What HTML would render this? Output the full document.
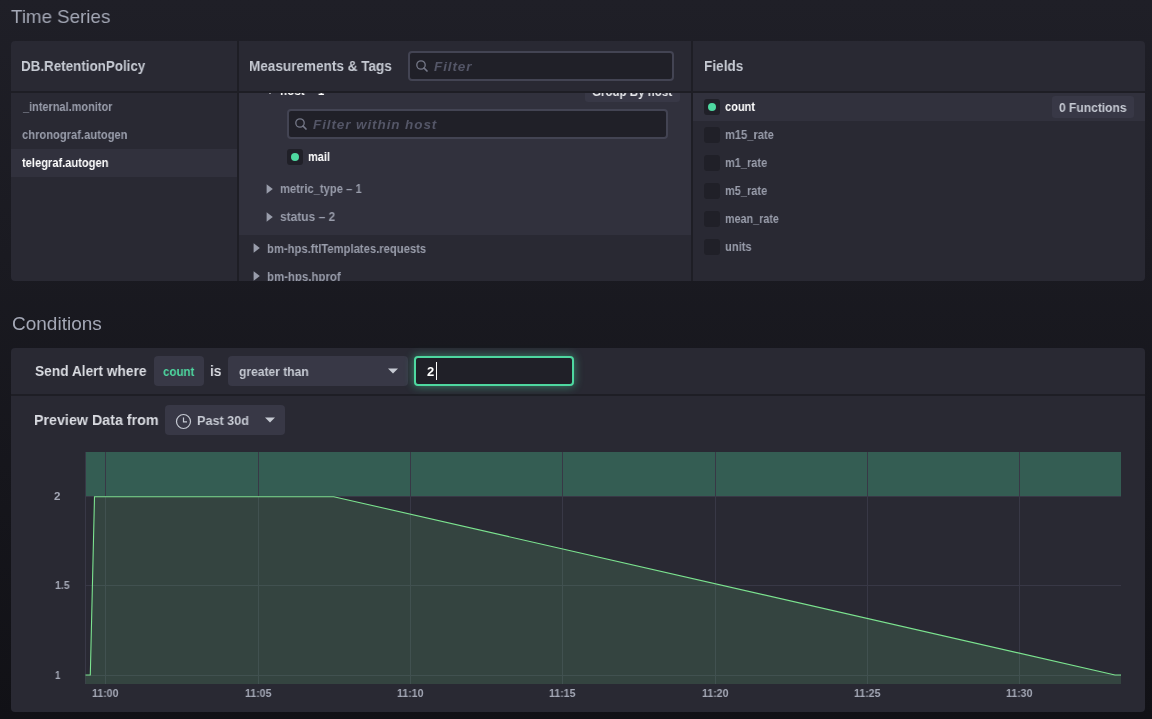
<!DOCTYPE html>
<html><head><meta charset="utf-8"><style>
html,body{margin:0;padding:0;width:1152px;height:719px;overflow:hidden;}
body{background:linear-gradient(to bottom,#1f1f27 0%,#111116 100%);font-family:"Liberation Sans",sans-serif;position:relative;}
.t{position:absolute;white-space:nowrap;will-change:transform;}
.r{position:absolute;}
</style></head><body>
<div class="t" style="left:11.2px;top:6.92px;font-size:19px;line-height:19px;color:#a4a8b6;transform:scaleX(0.9865);transform-origin:0 0;">Time Series</div>
<div class="t" style="left:11.7px;top:313.92px;font-size:19px;line-height:19px;color:#a4a8b6;transform:scaleX(1.0003);transform-origin:0 0;">Conditions</div>
<div class="r" style="left:11px;top:41px;width:1134px;height:240px;background:#292933;border-radius:4px;"></div>
<div class="r" style="left:239px;top:93px;width:452px;height:142px;background:#31313d;"></div>
<div class="r" style="left:11px;top:149px;width:226px;height:28px;background:#31313d;"></div>
<div class="r" style="left:693px;top:93px;width:452px;height:28px;background:#31313d;"></div>
<div class="r" style="left:11px;top:91px;width:1134px;height:2px;background:#1e1e25;"></div>
<div class="r" style="left:237px;top:41px;width:2px;height:240px;background:#1e1e25;"></div>
<div class="r" style="left:691px;top:41px;width:2px;height:240px;background:#1e1e25;"></div>
<div class="t" style="left:21.106884618630954px;top:58.30px;font-size:15px;line-height:15px;color:#c6cad3;font-weight:bold;transform:scaleX(0.8931);transform-origin:0 0;">DB.RetentionPolicy</div>
<div class="t" style="left:249.49674075550683px;top:58.30px;font-size:15px;line-height:15px;color:#c6cad3;font-weight:bold;transform:scaleX(0.9033);transform-origin:0 0;">Measurements &amp; Tags</div>
<div class="t" style="left:703.6929098708455px;top:58.30px;font-size:15px;line-height:15px;color:#c6cad3;font-weight:bold;transform:scaleX(0.9071);transform-origin:0 0;">Fields</div>
<div class="t" style="left:22.692527509595312px;top:100.00px;font-size:13px;line-height:13px;color:#999dab;font-weight:bold;transform:scaleX(0.8425);transform-origin:0 0;">_internal.monitor</div>
<div class="t" style="left:21.85px;top:128.00px;font-size:13px;line-height:13px;color:#999dab;font-weight:bold;transform:scaleX(0.8593);transform-origin:0 0;">chronograf.autogen</div>
<div class="t" style="left:21.85px;top:156.00px;font-size:13px;line-height:13px;color:#ffffff;font-weight:bold;transform:scaleX(0.8544);transform-origin:0 0;">telegraf.autogen</div>
<div class="r" style="left:408px;top:51px;width:266px;height:30px;background:#202028;box-sizing:border-box;border:2px solid #434453;border-radius:4px;"></div>
<svg class="r" style="left:414.2px;top:58.400000000000006px" width="16" height="16" viewBox="0 0 16 16"><circle cx="7" cy="7" r="4.2" fill="none" stroke="#757888" stroke-width="1.3"/><line x1="10" y1="10" x2="13" y2="13" stroke="#757888" stroke-width="1.7" stroke-linecap="round"/></svg>
<div class="t" style="left:434px;top:59.57px;font-size:13.5px;line-height:13.5px;color:#545667;letter-spacing:0.9px;font-style:italic;font-weight:bold;">Filter</div>
<div class="r" style="left:239px;top:93px;width:452px;height:188px;overflow:hidden">
<svg class="r" style="left:26px;top:-7px" width="10" height="10" viewBox="0 0 10 10"><path d="M0 2.5 L10 2.5 L5 8 Z" fill="#ffffff"/></svg>
<div class="t" style="left:41.0px;top:-9.00px;font-size:13px;line-height:13px;color:#ffffff;font-weight:bold;transform:scaleX(0.8999);transform-origin:0 0;">host – 1</div>
<div class="r" style="left:346px;top:-13px;width:95px;height:22px;background:#383846;border-radius:3px;"></div>
<div class="t" style="left:353.4px;top:-8.50px;font-size:13px;line-height:13px;color:#e7e8eb;font-weight:bold;transform:scaleX(0.8873);transform-origin:0 0;">Group By host</div>
</div>
<div class="r" style="left:287px;top:109px;width:381px;height:30px;background:#202028;box-sizing:border-box;border:2px solid #434453;border-radius:4px;"></div>
<svg class="r" style="left:293.4px;top:116.4px" width="16" height="16" viewBox="0 0 16 16"><circle cx="7" cy="7" r="4.2" fill="none" stroke="#757888" stroke-width="1.3"/><line x1="10" y1="10" x2="13" y2="13" stroke="#757888" stroke-width="1.7" stroke-linecap="round"/></svg>
<div class="t" style="left:313px;top:117.57px;font-size:13.5px;line-height:13.5px;color:#545667;letter-spacing:0.9px;font-style:italic;font-weight:bold;">Filter within host</div>
<div class="r" style="left:287px;top:149px;width:16px;height:16px;background:#202028;border-radius:3px;"></div>
<div class="r" style="left:291px;top:153px;width:8px;height:8px;background:#4ed8a0;border-radius:50%;"></div>
<div class="t" style="left:308.3px;top:150.00px;font-size:13px;line-height:13px;color:#ffffff;font-weight:bold;transform:scaleX(0.8464);transform-origin:0 0;">mail</div>
<svg class="r" style="left:266px;top:184px" width="8" height="10" viewBox="0 0 8 10"><path d="M0.6 0.3 L6.8 5 L0.6 9.7 Z" fill="#999dab"/></svg>
<div class="t" style="left:280.0px;top:182.00px;font-size:13px;line-height:13px;color:#999dab;font-weight:bold;transform:scaleX(0.8630);transform-origin:0 0;">metric_type – 1</div>
<svg class="r" style="left:266px;top:212px" width="8" height="10" viewBox="0 0 8 10"><path d="M0.6 0.3 L6.8 5 L0.6 9.7 Z" fill="#999dab"/></svg>
<div class="t" style="left:280.0px;top:210.00px;font-size:13px;line-height:13px;color:#999dab;font-weight:bold;transform:scaleX(0.9206);transform-origin:0 0;">status – 2</div>
<svg class="r" style="left:253px;top:243px" width="8" height="10" viewBox="0 0 8 10"><path d="M0.6 0.3 L6.8 5 L0.6 9.7 Z" fill="#999dab"/></svg>
<div class="t" style="left:267.1px;top:242.00px;font-size:13px;line-height:13px;color:#999dab;font-weight:bold;transform:scaleX(0.8648);transform-origin:0 0;">bm-hps.ftlTemplates.requests</div>
<svg class="r" style="left:253px;top:271px" width="8" height="10" viewBox="0 0 8 10"><path d="M0.6 0.3 L6.8 5 L0.6 9.7 Z" fill="#999dab"/></svg>
<div class="r" style="left:239px;top:262px;width:452px;height:19px;overflow:hidden">
<div class="t" style="left:28.0px;top:8.00px;font-size:13px;line-height:13px;color:#999dab;font-weight:bold;transform:scaleX(0.8794);transform-origin:0 0;">bm-hps.hprof</div>
</div>
<div class="r" style="left:704px;top:99px;width:16px;height:16px;background:#202028;border-radius:3px;"></div>
<div class="r" style="left:708px;top:103px;width:8px;height:8px;background:#4ed8a0;border-radius:50%;"></div>
<div class="t" style="left:725.3px;top:100.00px;font-size:13px;line-height:13px;color:#ffffff;font-weight:bold;transform:scaleX(0.8488);transform-origin:0 0;">count</div>
<div class="r" style="left:1052px;top:96px;width:82px;height:22px;background:#383846;border-radius:3px;"></div>
<div class="t" style="left:1059.1px;top:101.00px;font-size:13px;line-height:13px;color:#c6cad3;font-weight:bold;transform:scaleX(0.9255);transform-origin:0 0;">0 Functions</div>
<div class="r" style="left:704px;top:127px;width:16px;height:16px;background:#202028;border-radius:3px;"></div>
<div class="t" style="left:725.3px;top:128.00px;font-size:13px;line-height:13px;color:#999dab;font-weight:bold;transform:scaleX(0.8564);transform-origin:0 0;">m15_rate</div>
<div class="r" style="left:704px;top:155px;width:16px;height:16px;background:#202028;border-radius:3px;"></div>
<div class="t" style="left:725.3px;top:156.00px;font-size:13px;line-height:13px;color:#999dab;font-weight:bold;transform:scaleX(0.8461);transform-origin:0 0;">m1_rate</div>
<div class="r" style="left:704px;top:183px;width:16px;height:16px;background:#202028;border-radius:3px;"></div>
<div class="t" style="left:725.3px;top:184.00px;font-size:13px;line-height:13px;color:#999dab;font-weight:bold;transform:scaleX(0.8461);transform-origin:0 0;">m5_rate</div>
<div class="r" style="left:704px;top:211px;width:16px;height:16px;background:#202028;border-radius:3px;"></div>
<div class="t" style="left:725.3px;top:212.00px;font-size:13px;line-height:13px;color:#999dab;font-weight:bold;transform:scaleX(0.8286);transform-origin:0 0;">mean_rate</div>
<div class="r" style="left:704px;top:239px;width:16px;height:16px;background:#202028;border-radius:3px;"></div>
<div class="t" style="left:725.3px;top:240.00px;font-size:13px;line-height:13px;color:#999dab;font-weight:bold;transform:scaleX(0.8565);transform-origin:0 0;">units</div>
<div class="r" style="left:11px;top:348px;width:1134px;height:364px;background:#292933;border-radius:4px;"></div>
<div class="r" style="left:11px;top:394px;width:1134px;height:2px;background:#1e1e25;"></div>
<div class="t" style="left:35.2px;top:362.88px;font-size:15.5px;line-height:15.5px;color:#dadce2;font-weight:bold;transform:scaleX(0.8843);transform-origin:0 0;">Send Alert where</div>
<div class="r" style="left:154px;top:356px;width:50px;height:30px;background:#383846;border-radius:4px;"></div>
<div class="t" style="left:163.0px;top:365.00px;font-size:13px;line-height:13px;color:#4ed8a0;font-weight:bold;transform:scaleX(0.8876);transform-origin:0 0;">count</div>
<div class="t" style="left:209.91554490293885px;top:362.88px;font-size:15.5px;line-height:15.5px;color:#dadce2;font-weight:bold;transform:scaleX(0.8845);transform-origin:0 0;">is</div>
<div class="r" style="left:228px;top:356px;width:180px;height:30px;background:#383846;border-radius:4px;"></div>
<div class="t" style="left:239.3px;top:365.00px;font-size:13px;line-height:13px;color:#c6cad3;font-weight:bold;transform:scaleX(0.9270);transform-origin:0 0;">greater than</div>
<svg class="r" style="left:388px;top:366px" width="10" height="10" viewBox="0 0 10 10"><path d="M0 2.5 L10 2.5 L5 7.5 Z" fill="#c6cad3"/></svg>
<div class="r" style="left:414px;top:356px;width:160px;height:30px;background:#202028;box-sizing:border-box;border:2px solid #4ed8a0;border-radius:4px;box-shadow:0 0 8px 1px rgba(78,216,160,0.45);"></div>
<div class="t" style="left:427px;top:365.00px;font-size:13px;line-height:13px;color:#ffffff;font-weight:bold;">2</div>
<div class="r" style="left:436px;top:362px;width:1px;height:18px;background:#ffffff;"></div>
<div class="t" style="left:34.479156567661356px;top:411.88px;font-size:15.5px;line-height:15.5px;color:#dadce2;font-weight:bold;transform:scaleX(0.9208);transform-origin:0 0;">Preview Data from</div>
<div class="r" style="left:165px;top:405px;width:120px;height:30px;background:#383846;border-radius:4px;"></div>
<svg class="r" style="left:175px;top:413px" width="17" height="17" viewBox="0 0 17 17"><circle cx="8.5" cy="8.5" r="7" fill="none" stroke="#c6cad3" stroke-width="1.2"/><path d="M8.5 4.5 V8.8 H12" fill="none" stroke="#c6cad3" stroke-width="1.2"/></svg>
<div class="t" style="left:197.0px;top:414.00px;font-size:13px;line-height:13px;color:#c6cad3;font-weight:bold;transform:scaleX(0.9714);transform-origin:0 0;">Past 30d</div>
<svg class="r" style="left:265px;top:415px" width="10" height="10" viewBox="0 0 10 10"><path d="M0 2.5 L10 2.5 L5 7.5 Z" fill="#c6cad3"/></svg>
<svg class="r" style="left:0;top:0" width="1152" height="719" viewBox="0 0 1152 719"><rect x="85.5" y="452" width="1035.5" height="44" fill="rgba(78,216,160,0.3)"/><line x1="105.5" y1="452" x2="105.5" y2="684" stroke="#383846" stroke-width="1"/><line x1="258.5" y1="452" x2="258.5" y2="684" stroke="#383846" stroke-width="1"/><line x1="410.5" y1="452" x2="410.5" y2="684" stroke="#383846" stroke-width="1"/><line x1="562.5" y1="452" x2="562.5" y2="684" stroke="#383846" stroke-width="1"/><line x1="715.5" y1="452" x2="715.5" y2="684" stroke="#383846" stroke-width="1"/><line x1="867.5" y1="452" x2="867.5" y2="684" stroke="#383846" stroke-width="1"/><line x1="1019.5" y1="452" x2="1019.5" y2="684" stroke="#383846" stroke-width="1"/><line x1="85.5" y1="496.5" x2="1121" y2="496.5" stroke="#383846" stroke-width="1"/><line x1="85.5" y1="585.5" x2="1121" y2="585.5" stroke="#383846" stroke-width="1"/><line x1="85.5" y1="675.5" x2="1121" y2="675.5" stroke="#383846" stroke-width="1"/><line x1="85.5" y1="452" x2="85.5" y2="684" stroke="#383846" stroke-width="1"/><path d="M85.5,675 L90.3,675 L94.5,496.7 L333.75,496.7 L1115,675 L1121,675 L1121,684 L85.5,684 Z" fill="rgba(124,228,144,0.15)"/><path d="M85.5,675 L90.3,675 L94.5,496.7 L333.75,496.7 L1115,675 L1121,675" fill="none" stroke="#7ce490" stroke-width="1.1"/></svg>
<div class="t" style="left:53.9px;top:490.69px;font-size:11px;line-height:11px;color:#a4a8b6;font-weight:bold;transform:scaleX(1.0500);transform-origin:0 0;">2</div>
<div class="t" style="left:54.6px;top:579.69px;font-size:11px;line-height:11px;color:#a4a8b6;font-weight:bold;transform:scaleX(0.9556);transform-origin:0 0;">1.5</div>
<div class="t" style="left:54.6px;top:669.69px;font-size:11px;line-height:11px;color:#a4a8b6;font-weight:bold;transform:scaleX(0.8833);transform-origin:0 0;">1</div>
<div class="t" style="left:92.25px;top:687.69px;font-size:11px;line-height:11px;color:#a4a8b6;font-weight:bold;transform:scaleX(0.9595);transform-origin:0 0;">11:00</div>
<div class="t" style="left:245.24999999999997px;top:687.69px;font-size:11px;line-height:11px;color:#a4a8b6;font-weight:bold;transform:scaleX(0.9595);transform-origin:0 0;">11:05</div>
<div class="t" style="left:397.25px;top:687.69px;font-size:11px;line-height:11px;color:#a4a8b6;font-weight:bold;transform:scaleX(0.9595);transform-origin:0 0;">11:10</div>
<div class="t" style="left:549.25px;top:687.69px;font-size:11px;line-height:11px;color:#a4a8b6;font-weight:bold;transform:scaleX(0.9595);transform-origin:0 0;">11:15</div>
<div class="t" style="left:702.25px;top:687.69px;font-size:11px;line-height:11px;color:#a4a8b6;font-weight:bold;transform:scaleX(0.9595);transform-origin:0 0;">11:20</div>
<div class="t" style="left:854.25px;top:687.69px;font-size:11px;line-height:11px;color:#a4a8b6;font-weight:bold;transform:scaleX(0.9595);transform-origin:0 0;">11:25</div>
<div class="t" style="left:1006.25px;top:687.69px;font-size:11px;line-height:11px;color:#a4a8b6;font-weight:bold;transform:scaleX(0.9595);transform-origin:0 0;">11:30</div>
</body></html>
